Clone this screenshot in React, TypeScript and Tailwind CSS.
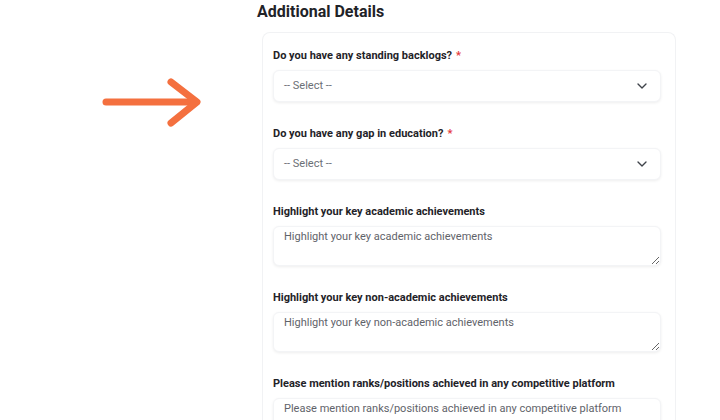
import { ChevronDown } from 'lucide-react'

function Label({ text, required }: { text: string; required?: boolean }) {
  return (
    <label className="mb-[6px] block h-4 text-[11px] font-bold leading-4 text-[#1f2328]">
      {text}
      {required && <span className="ml-1 text-[#e5383b]">*</span>}
    </label>
  )
}

function SelectField({ label }: { label: string }) {
  return (
    <div>
      <Label text={label} required />
      <div className="flex h-[32px] w-full items-center justify-between rounded-md border border-[#f3f4f6] bg-white pl-[10px] pr-[10px] shadow-[0_1px_3px_rgba(0,0,0,0.07)]">
        <span className="text-[11px] text-[#6b6f75]">-- Select --</span>
        <ChevronDown className="h-4 w-4 text-[#3f434a]" strokeWidth={2} />
      </div>
    </div>
  )
}

function AreaField({ label }: { label: string }) {
  return (
    <div>
      <Label text={label} />
      <textarea
        placeholder={label}
        className="block h-[40px] w-full resize-y rounded-md border border-[#f3f4f6] bg-white px-[10px] pt-[3px] text-[11px] leading-[14px] shadow-[0_1px_3px_rgba(0,0,0,0.07)] outline-none placeholder:text-[#5f636a]"
      />
    </div>
  )
}

export default function App() {
  return (
    <div
      className="flex h-[420px] w-[720px] overflow-hidden bg-white"
      style={{ fontFamily: 'Roboto, "Liberation Sans", sans-serif' }}
    >
      <div className="w-[257px] shrink-0 pl-[101px] pt-[78px]">
        <svg width="106" height="50" viewBox="0 0 106 50" fill="none">
          <g stroke="#f4703f" strokeWidth="7" strokeLinecap="round" strokeLinejoin="round">
            <path d="M5 24h90" />
            <path d="M70 4l26 20-26 21" />
          </g>
        </svg>
      </div>
      <div className="w-[420px] shrink-0">
        <h2 className="mb-2 h-6 text-[16px] font-bold leading-6 text-[#1f2328]">Additional Details</h2>
        <div className="ml-[5px] flex w-[414px] flex-col gap-[24px] rounded-t-lg border border-b-0 border-[#f1f2f4] pb-4 pl-[10px] pr-[14px] pt-[15px]">
          <SelectField label="Do you have any standing backlogs?" />
          <SelectField label="Do you have any gap in education?" />
          <AreaField label="Highlight your key academic achievements" />
          <AreaField label="Highlight your key non-academic achievements" />
          <AreaField label="Please mention ranks/positions achieved in any competitive platform" />
        </div>
      </div>
    </div>
  )
}
